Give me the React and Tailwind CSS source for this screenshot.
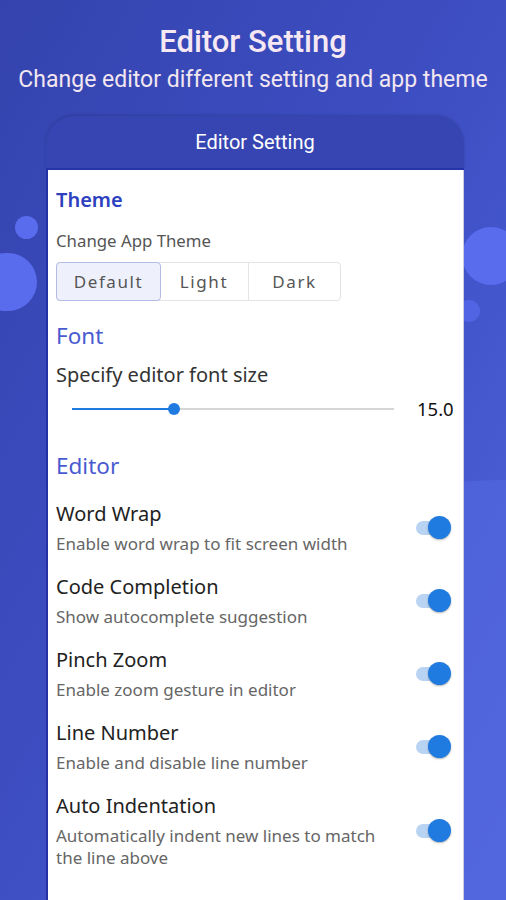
import React from 'react';

const rows = [
    { title: 'Word Wrap', sub: 'Enable word wrap to fit screen width' },
    { title: 'Code Completion', sub: 'Show autocomplete suggestion' },
    { title: 'Pinch Zoom', sub: 'Enable zoom gesture in editor' },
    { title: 'Line Number', sub: 'Enable and disable line number' },
    { title: 'Auto Indentation', sub: 'Automatically indent new lines to match the line above' },
];

const Toggle = () => (
    <div className="relative w-[36px] h-[24px] flex-shrink-0">
        <div className="absolute left-[1px] top-[5px] w-[30px] h-[14px] rounded-full bg-[#b9d3f3]" />
        <div className="absolute right-0 top-0 w-[23px] h-[23px] rounded-full bg-[#1f7be0] shadow-[0_1px_2px_rgba(0,0,0,0.3)]" />
    </div>
);

const App = () => {
    const font = { fontFamily: '"Noto Sans", "Open Sans", sans-serif' };

    return (
        <div className="relative w-[506px] h-[900px] overflow-hidden bg-gradient-to-br from-[#3443ad] via-[#3e4fc4] to-[#5266dd]">
            {/* decorative circles */}
            <div className="absolute left-[15px] top-[216px] w-[23px] h-[23px] rounded-full bg-[#5a6cee]" />
            <div className="absolute left-[-23px] top-[253px] w-[60px] h-[58px] rounded-full bg-[#5a6cee]" />
            <div className="absolute left-[462px] top-[227px] w-[58px] h-[58px] rounded-full bg-[#5a6cee]" />
            <div className="absolute left-[458px] top-[300px] w-[22px] h-[22px] rounded-full bg-[#5064e4]" />
            <div className="absolute left-[120px] top-[480px] w-[760px] h-[760px] rounded-full bg-[#5468e0] opacity-60" />

            <div className="relative flex flex-col h-full" style={{ fontFamily: 'Roboto, sans-serif' }}>
                <div className="pt-[24px] text-center">
                    <h1 className="text-[31px] leading-[36px] font-medium text-[#f6e8f2]">Editor Setting</h1>
                    <p className="mt-[6px] text-[23px] leading-[28px] text-[#f2e6f0]">
                        Change editor different setting and app theme
                    </p>
                </div>

                <div className="ml-[46px] mt-[22px] w-[418px] flex-1 flex flex-col">
                    <div className="h-[54px] rounded-t-[28px] bg-[#3645b1] border-b-2 border-[#2534a8] flex items-center justify-center shadow-[0_-1px_3px_rgba(0,0,0,0.15)]">
                        <span className="text-[20px] text-white">Editor Setting</span>
                    </div>

                    <div className="flex-1 bg-white border-l-2 border-[#2432a6] border-r border-r-[#c9cbe0] pl-[8px] pr-[12px]" style={font}>
                        <p className="pt-[16px] text-[20px] leading-[28px] font-semibold text-[#2c40c0]">Theme</p>
                        <p className="mt-[15px] text-[16.8px] leading-[24px] text-[#555]">Change App Theme</p>
                        <div className="mt-[9px] flex w-[285px] h-[39px] rounded-[4px] border border-[#e3e3e8] text-[17px] tracking-[1.6px] text-[#555]">
                            <div className="w-[105px] flex items-center justify-center rounded-[4px] border border-[#b3bbe6] bg-[#eef1fb] -m-px">Default</div>
                            <div className="w-[89px] flex items-center justify-center border-r border-[#e3e3e8]">Light</div>
                            <div className="flex-1 flex items-center justify-center">Dark</div>
                        </div>

                        <p className="mt-[20px] text-[22.5px] leading-[30px] text-[#4a5bd0]">Font</p>
                        <p className="mt-[11px] text-[20px] leading-[26px] text-[#333]">Specify editor font size</p>
                        <div className="mt-[6px] flex items-center h-[30px]">
                            <div className="relative ml-[16px] w-[322px] h-[2px] bg-[#d6d6d6] flex-shrink-0">
                                <div className="absolute left-0 top-0 h-[2px] w-[102px] bg-[#1f7be0]" />
                                <div className="absolute left-[96px] top-[-5px] w-[12px] h-[12px] rounded-full bg-[#1f7be0]" />
                            </div>
                            <span className="ml-[23px] text-[18.5px] text-[#111] whitespace-nowrap">15.0</span>
                        </div>

                        <p className="mt-[27px] text-[22.5px] leading-[30px] text-[#4a5bd0]">Editor</p>

                        <div className="mt-[19px] flex flex-col gap-[18px]">
                            {rows.map((r) => (
                                <div key={r.title} className="flex items-center justify-between">
                                    <div className="w-[340px]">
                                        <p className="text-[20px] leading-[28px] text-[#222]">{r.title}</p>
                                        <p className="mt-[5px] text-[17px] leading-[22px] text-[#666]">{r.sub}</p>
                                    </div>
                                    <Toggle />
                                </div>
                            ))}
                        </div>
                    </div>
                </div>
            </div>
        </div>
    );
};

export default App;
